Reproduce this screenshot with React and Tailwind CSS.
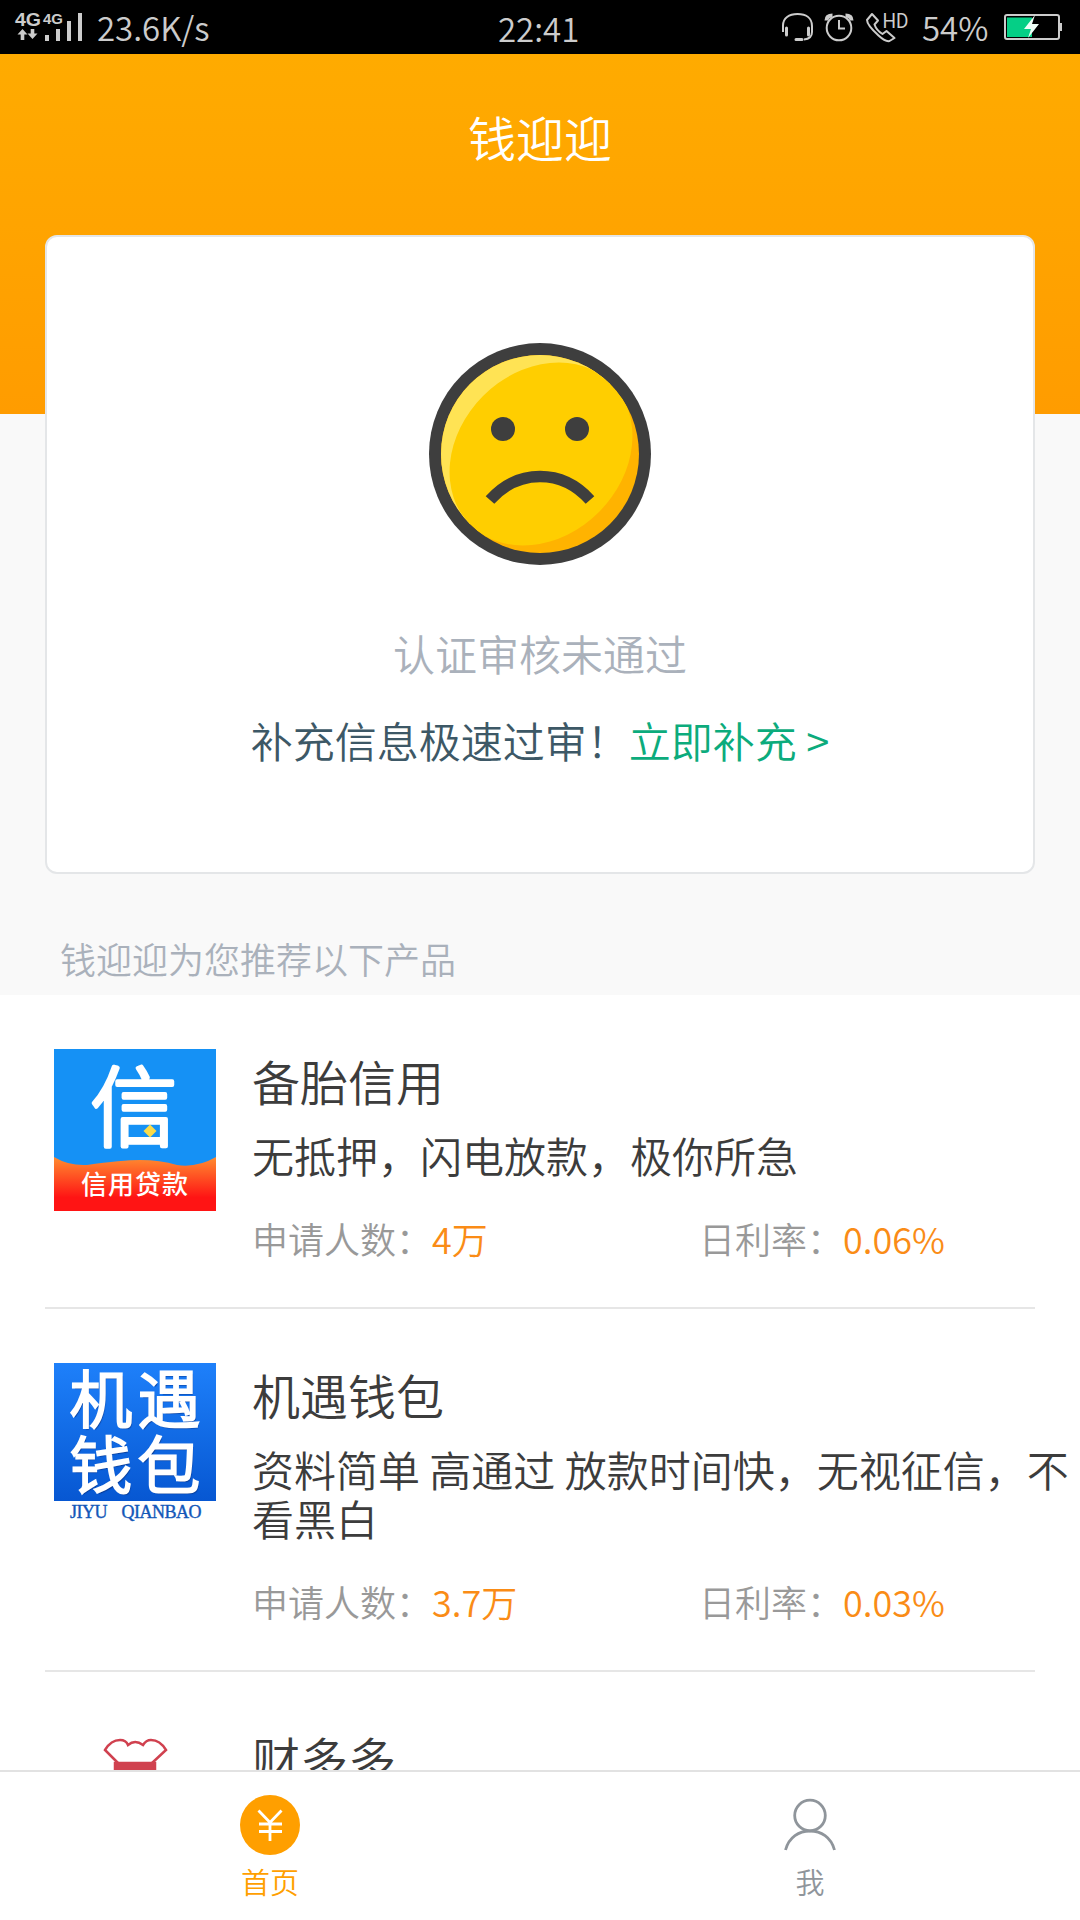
import React from "react";

function StatusBar() {
  return (
    <div className="flex h-[54px] items-start bg-black text-[#cccccc]">
      <svg width="84" height="54" viewBox="0 0 84 54" className="shrink-0" fill="#cccccc">
        <text x="15" y="26" fontSize="18" fontWeight="700" textLength="26" lengthAdjust="spacingAndGlyphs" fontFamily="Liberation Sans, sans-serif">4G</text>
        <text x="43" y="24" fontSize="15.500" fontWeight="700" textLength="20" lengthAdjust="spacingAndGlyphs" fontFamily="Liberation Sans, sans-serif">4G</text>
        <path d="M22.500 29l5 5.500h-3.200V40h-3.600v-5.500h-3.200zM32.500 39l-5-5.500h3.200V29h3.600v4.500h3.200z" />
        <path d="M45 35h4v6h-4zM56 29h4v12h-4zM67 21h4v20h-4zM78 13h4v28h-4z" />
      </svg>
      <span className="ml-[13px] w-[111px] whitespace-nowrap text-[33px] leading-[54px]">23.6K/s</span>
      <span className="ml-[290px] w-[80px] whitespace-nowrap text-[33px] leading-[56px]">22:41</span>
      <svg width="134" height="54" viewBox="0 0 134 54" className="ml-[201px] shrink-0" fill="none" stroke="#cccccc" strokeWidth="2">
        <path d="M4 32V25.500C4 18 10 14 18.500 14S33 18 33 26v6c0 5-3 7-8 7.500" />
        <path d="M7.500 28v7M29.500 28v7M17 39.500h6" strokeWidth="3" strokeLinecap="round" />
        <circle cx="60" cy="28" r="12.300" />
        <path d="M60 20v8.500h6" />
        <path d="M47.500 20.500q0-5 6-5M72.500 20.500q0-5-6-5" strokeWidth="4" />
        <path d="M93 14l6 6.500-3.500 4q2 6 8 9.500l4-3 8 7-5 3q-4 1-11-5.500Q88 25 88 20z" strokeLinejoin="round" />
        <text x="103.500" y="28" fill="#cccccc" stroke="none" fontSize="20" textLength="26" lengthAdjust="spacingAndGlyphs" fontFamily="Roboto, sans-serif" fontWeight="400">HD</text>
      </svg>
      <span className="ml-[9px] w-[76px] whitespace-nowrap text-[33px] leading-[54px]">54%</span>
      <svg width="64" height="54" viewBox="0 0 64 54" className="shrink-0">
        <rect x="7" y="15" width="54" height="24" rx="2" fill="none" stroke="#cccccc" strokeWidth="2" />
        <path d="M9 17.500h25v19.500H9z" fill="#05cf86" />
        <path d="M37 15L26 29h7l-3 9 11-14h-7z" fill="#f0fff8" />
        <path d="M62 23h2v8h-2z" fill="#cccccc" />
      </svg>
    </div>
  );
}

function SadFace() {
  return (
    <svg width="222" height="222" viewBox="0 0 222 222" className="mt-[106px] shrink-0">
      <defs>
        <clipPath id="face"><circle cx="111" cy="111" r="99" /></clipPath>
      </defs>
      <circle cx="111" cy="111" r="111" fill="#3e3e3e" />
      <g clipPath="url(#face)">
        <path d="M0 0h222v222H0z" fill="#ffb300" />
        <path d="M0 0h222L0 222z" fill="#ffe354" />
        <ellipse cx="112" cy="111" rx="100" ry="82" transform="rotate(-45 112 111)" fill="#ffce00" />
      </g>
      <circle cx="74" cy="86" r="12" fill="#3e3e3e" />
      <circle cx="148" cy="86" r="12" fill="#3e3e3e" />
      <path d="M61 157Q82 133.500 111 133.500T161 157" fill="none" stroke="#3e3e3e" strokeWidth="11.500" />
    </svg>
  );
}

function CreditLogo() {
  return (
    <svg width="162" height="162" viewBox="0 0 162 162" className="overflow-visible" fontFamily="Noto Sans CJK SC, sans-serif">
      <defs>
        <linearGradient id="wave" x1="0" y1="0" x2="0" y2="1">
          <stop offset="0" stopColor="#ff8c30" />
          <stop offset="0.750" stopColor="#ff1414" />
        </linearGradient>
      </defs>
      <path d="M0 0h162v162H0z" fill="#1591f5" />
      <text x="36.500" y="90.500" fontSize="87" fontWeight="300" fill="#fff" stroke="#fff" strokeWidth="4" strokeLinejoin="round">信</text>
      <path d="M96 75.500l6.500 6.500-6.500 6.500-6.500-6.500z" fill="#fadb4a" />
      <path d="M0 108q15 9 33 8 35-5 53-5 20 0 37 5 20 3 39-8v54H0z" fill="url(#wave)" />
      <text x="27" y="145" fontSize="26" fontWeight="500" fill="#fff" textLength="107">信用贷款</text>
    </svg>
  );
}

function WalletLogo() {
  return (
    <div className="h-[162px] w-[162px]">
      <div className="grid h-[138px] grid-cols-[68px_68px] content-start justify-items-center bg-linear-to-b from-[#1e80fa] to-[#0757d2] pl-[13px] text-[62px] leading-[66px] font-light text-white [-webkit-text-stroke:3px_white] [text-shadow:1.5px_1.5px_1px_#083a94]">
        <span>机</span>
        <span>遇</span>
        <span>钱</span>
        <span>包</span>
      </div>
      <div className="flex h-[24px] justify-between pr-[15px] pl-[16px] font-['Liberation_Serif',serif] text-[18px] leading-[22px] text-[#1257b8] [-webkit-text-stroke:0.4px_#1257b8]">
        <span className="tracking-[-0.5px]">JIYU</span>
        <span className="tracking-[-0.5px]">QIANBAO</span>
      </div>
    </div>
  );
}

function ChefLogo() {
  return (
    <svg width="162" height="162" viewBox="0 0 162 162" fill="none" stroke="#d0414f" strokeWidth="2.500">
      <path d="M64 37L51 24q6-10 15-10 6 0 8 5 7-6 15 0 3-5 8-5 9 0 15 10L98 37" />
      <path d="M61 37h40v12H61z" fill="#d0414f" />
    </svg>
  );
}

function Stat({ label, value }) {
  return (
    <div className="flex text-[36px] leading-[44px] whitespace-nowrap">
      <span className="text-[#999999]">{label}</span>
      <span className="text-[#fa8c16]">{value}</span>
    </div>
  );
}

function Product({ logo, name, desc, people, rate }) {
  return (
    <div className="mx-[45px] flex border-b-2 border-[#e6e6e6] pl-[9px] pt-[54px] pb-[47px]">
      <div className="w-[162px] shrink-0">{logo}</div>
      <div className="-mr-[45px] ml-[36px] min-w-0 flex-1 text-[#3c3c3c]">
        <div className="pt-[3px] text-[48px] leading-[56px]">{name}</div>
        {desc && <div className="mt-[22px] text-[42px] leading-[49px]">{desc}</div>}
        {people && (
          <div className="mt-[37px] grid grid-cols-[447px_1fr]">
            <Stat label="申请人数：" value={people} />
            <Stat label="日利率：" value={rate} />
          </div>
        )}
      </div>
    </div>
  );
}

function TabBar() {
  return (
    <nav className="grid h-[150px] shrink-0 grid-cols-2 border-t-2 border-[#e2e2e2] bg-white text-[29px] leading-[36px]">
      <div className="flex flex-col items-center pt-[23px] text-[#ff9f00]">
        <svg width="60" height="60" viewBox="0 0 60 60">
          <circle cx="30" cy="30" r="30" fill="#ff9f00" />
          <path d="M18.500 15.500L30 27.500 41.500 15.500M30 27v19M19 29h23M19 36.500h23" fill="none" stroke="#fff" strokeWidth="2.800" />
        </svg>
        <span className="mt-[8px]">首页</span>
      </div>
      <div className="flex flex-col items-center pt-[23px] text-[#8f959b]">
        <svg width="60" height="60" viewBox="0 0 60 60" fill="none" stroke="#8f959b" strokeWidth="2.800">
          <circle cx="30" cy="20.500" r="15.300" />
          <path d="M5.500 55C9 42 19 36 30 36s21 6 24.500 19" />
        </svg>
        <span className="mt-[8px]">我</span>
      </div>
    </nav>
  );
}

export default function App() {
  return (
    <div className="flex h-[1920px] w-[1080px] flex-col overflow-hidden bg-[#f9f9f9] font-['Noto_Sans_CJK_SC',sans-serif] font-[350]">
      <StatusBar />
      <main className="min-h-0 flex-1 overflow-hidden">
        <header className="h-[360px] bg-linear-to-b from-[#ffab00] to-[#ff9c00] text-white">
          <h1 className="pt-[54px] text-center text-[48px] leading-[56px]">钱迎迎</h1>
        </header>
        <section className="relative mx-[45px] -mt-[179px] flex h-[639px] flex-col items-center rounded-[12px] border-2 border-[#e4e6e8] bg-white text-[42px]">
          <SadFace />
          <p className="mt-[60px] leading-[56px] text-[#aab1bb]">认证审核未通过</p>
          <p className="mt-[31px] whitespace-nowrap leading-[56px] text-[#3d5866]">
            补充信息极速过审！<span className="text-[#0cab7c]">立即补充 &gt;</span>
          </p>
        </section>
        <h2 className="h-[121px] pl-[60px] pt-[62px] text-[36px] leading-[44px] text-[#aab1bb]">钱迎迎为您推荐以下产品</h2>
        <div className="bg-white">
          <Product logo={<CreditLogo />} name="备胎信用" desc="无抵押，闪电放款，极你所急" people="4万" rate="0.06%" />
          <Product logo={<WalletLogo />} name="机遇钱包" desc="资料简单 高通过 放款时间快，无视征信，不看黑白" people="3.7万" rate="0.03%" />
          <Product logo={<ChefLogo />} name="财多多" />
        </div>
      </main>
      <TabBar />
    </div>
  );
}
